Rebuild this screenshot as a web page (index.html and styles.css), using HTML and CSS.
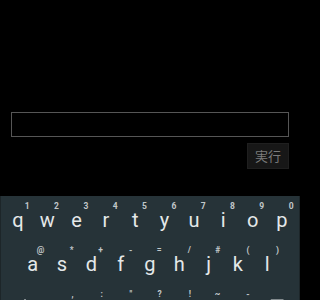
FILE: index.html
```html
<!DOCTYPE html>
<html lang="ja">
<head>
<meta charset="utf-8">
<title>実行</title>
<link rel="stylesheet" href="styles.css">
</head>
<body>
<div class="screen">
  <main class="content">
    <div class="input"></div>
    <div class="actions">
      <button class="run">実行</button>
    </div>
  </main>
  <section class="keyboard">
    <div class="row">
      <div class="key"><span class="ch">q</span><span class="hint">1</span></div>
      <div class="key"><span class="ch">w</span><span class="hint">2</span></div>
      <div class="key"><span class="ch">e</span><span class="hint">3</span></div>
      <div class="key"><span class="ch">r</span><span class="hint">4</span></div>
      <div class="key"><span class="ch">t</span><span class="hint">5</span></div>
      <div class="key"><span class="ch">y</span><span class="hint">6</span></div>
      <div class="key"><span class="ch">u</span><span class="hint">7</span></div>
      <div class="key"><span class="ch">i</span><span class="hint">8</span></div>
      <div class="key"><span class="ch">o</span><span class="hint">9</span></div>
      <div class="key"><span class="ch">p</span><span class="hint">0</span></div>
    </div>
    <div class="row row-mid">
      <div class="key"><span class="ch">a</span><span class="hint">@</span></div>
      <div class="key"><span class="ch">s</span><span class="hint">*</span></div>
      <div class="key"><span class="ch">d</span><span class="hint">+</span></div>
      <div class="key"><span class="ch">f</span><span class="hint">-</span></div>
      <div class="key"><span class="ch">g</span><span class="hint">=</span></div>
      <div class="key"><span class="ch">h</span><span class="hint">/</span></div>
      <div class="key"><span class="ch">j</span><span class="hint">#</span></div>
      <div class="key"><span class="ch">k</span><span class="hint">(</span></div>
      <div class="key"><span class="ch">l</span><span class="hint">)</span></div>
    </div>
    <div class="row">
      <div class="key wide">
        <svg class="icon" width="14" height="14" viewBox="0 0 14 14"><path d="M7 1 L13 8 H9.5 V13 H4.5 V8 H1 Z" fill="none" stroke="#dfe3e4" stroke-width="1.4"/></svg>
      </div>
      <div class="key"><span class="ch">z</span><span class="hint">,</span></div>
      <div class="key"><span class="ch">x</span><span class="hint">:</span></div>
      <div class="key"><span class="ch">c</span><span class="hint">"</span></div>
      <div class="key"><span class="ch">v</span><span class="hint">?</span></div>
      <div class="key"><span class="ch">b</span><span class="hint">!</span></div>
      <div class="key"><span class="ch">n</span><span class="hint">~</span></div>
      <div class="key"><span class="ch">m</span><span class="hint">-</span></div>
      <div class="key wide">
        <svg class="icon" width="18" height="12" viewBox="0 0 18 12"><path d="M5 0.5 H17.5 V11.5 H5 L0.5 6 Z" fill="#dfe3e4"/></svg>
      </div>
    </div>
  </section>
</div>
</body>
</html>
```

FILE: styles.css
```css
html, body {
  margin: 0;
  padding: 0;
  width: 300px;
  height: 300px;
  overflow: hidden;
  background: #000;
}

.screen {
  display: flex;
  flex-direction: column;
  width: 300px;
  height: 300px;
  overflow: hidden;
}

.content {
  height: 196px;
  flex: none;
  box-sizing: border-box;
  padding: 112px 11px 0 11px;
  display: flex;
  flex-direction: column;
}

.input {
  height: 25px;
  box-sizing: border-box;
  border: 1px solid #565656;
  background: #000;
}

.actions {
  display: flex;
  justify-content: flex-end;
  margin-top: 6px;
}

.run {
  width: 42px;
  height: 26px;
  margin: 0;
  padding: 0;
  border: 1px solid #1f1f1f;
  background: #171717;
  color: #7c7c7c;
  font-family: "Noto Sans CJK JP", "Noto Sans CJK SC", sans-serif;
  font-size: 13px;
  line-height: 24px;
  text-align: center;
}

.keyboard {
  flex: none;
  height: 140px;
  box-sizing: border-box;
  background: #263338;
  border-left: 1px solid #1d2629;
  border-right: 1px solid #1d2629;
  padding: 0 2.3px;
  display: flex;
  flex-direction: column;
}

.row {
  display: flex;
  height: 44px;
  flex: none;
}

.row-mid {
  padding: 0 14.67px;
}

.key {
  position: relative;
  width: 29.34px;
  flex: none;
  display: flex;
  justify-content: center;
  padding-top: 14px;
  box-sizing: border-box;
}

.key.wide {
  width: 44px;
  padding-top: 15px;
}

.ch {
  font-family: Roboto, "Liberation Sans", sans-serif;
  font-size: 20px;
  line-height: 20px;
  color: #e4e8e9;
  height: 20px;
}

.hint {
  position: absolute;
  top: 6px;
  right: 3px;
  font-family: Roboto, "Liberation Sans", sans-serif;
  font-weight: 700;
  font-size: 8.5px;
  line-height: 8.5px;
  color: #c2c8ca;
}

.icon {
  display: block;
}
```
